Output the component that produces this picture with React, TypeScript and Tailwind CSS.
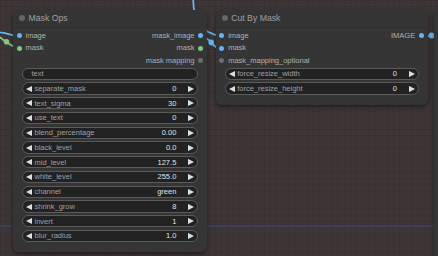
import React from "react";

type Slot = { label: string; color: string };

function Dot({ color }: { color: string }) {
  return <span className="block h-[5px] w-[5px] shrink-0 rounded-full" style={{ backgroundColor: color }} />;
}

function Arrow({ dir }: { dir: "l" | "r" }) {
  return (
    <svg
      className={
        "absolute top-1/2 -translate-y-1/2 " + (dir === "l" ? "left-[2.7px]" : "right-[2.7px]")
      }
      width="6.2"
      height="6.2"
      viewBox="0 0 10 10"
    >
      {dir === "l" ? (
        <polygon points="10,0 0,5 10,10" fill="#dddddd" />
      ) : (
        <polygon points="0,0 10,5 0,10" fill="#dddddd" />
      )}
    </svg>
  );
}

function NumWidget({ label, value }: { label: string; value: string }) {
  return (
    <div className="relative flex h-[12.3px] items-center rounded-full border border-[#5a5a5a] bg-[#222222] leading-none">
      <Arrow dir="l" />
      <span className="pl-[11.3px] text-[#a0a0a0]">{label}</span>
      <span className="ml-auto pr-[20.5px] text-[#e0e0e0]">{value}</span>
      <Arrow dir="r" />
    </div>
  );
}

function TextWidget({ label }: { label: string }) {
  return (
    <div className="flex h-[12.3px] items-center rounded-full border border-[#5a5a5a] bg-[#222222] leading-none">
      <span className="pl-[8.3px] text-[#a0a0a0]">{label}</span>
    </div>
  );
}

function SlotRows({ inputs, outputs }: { inputs: (Slot | null)[]; outputs: (Slot | null)[] }) {
  const n = Math.max(inputs.length, outputs.length);
  const rows = [];
  for (let i = 0; i < n; i++) {
    const a = inputs[i];
    const b = outputs[i];
    rows.push(
      <div key={i} className="flex h-[12.3px] items-center text-[#b0b0b0] leading-none">
        {a ? (
          <div className="flex items-center">
            <span className="ml-[3.7px]">
              <Dot color={a.color} />
            </span>
            <span className="ml-[3.8px]">{a.label}</span>
          </div>
        ) : null}
        {b ? (
          <div className="ml-auto flex items-center">
            <span>{b.label}</span>
            <span className="ml-[3.8px] mr-[3.7px]">
              <Dot color={b.color} />
            </span>
          </div>
        ) : null}
      </div>
    );
  }
  return <div className="flex flex-col">{rows}</div>;
}

function Node({
  title,
  className,
  inputs,
  outputs,
  children,
}: {
  title: string;
  className: string;
  inputs: (Slot | null)[];
  outputs: (Slot | null)[];
  children: React.ReactNode;
}) {
  return (
    <div
      className={
        "absolute flex flex-col rounded-[6px] bg-[#353535] shadow-[0_2px_4px_rgba(0,0,0,0.45)] text-[7.5px] " +
        className
      }
    >
      <div className="flex h-[18px] shrink-0 items-center rounded-t-[6px] border-b border-[#2e2e2e] bg-[#343434]">
        <span className="ml-[6.3px] block h-[5.6px] w-[5.6px] rounded-full bg-[#666666]" />
        <span className="ml-[3.6px] text-[8.7px] leading-none text-[#a0a0a0]">{title}</span>
      </div>
      <div className="flex flex-col pt-[2.2px] pb-[10px]">
        <SlotRows inputs={inputs} outputs={outputs} />
        <div className="mx-[9.2px] mt-[1.1px] flex flex-col gap-[2.46px]">{children}</div>
      </div>
    </div>
  );
}

const BLUE = "#64b5f6";
const GREEN = "#81c784";
const GRAY = "#6b6b73";

export default function App() {
  return (
    <div className="relative h-[256px] w-[438px] overflow-hidden bg-[#3e3536] font-['Liberation_Sans',Arial,sans-serif]">
      <div className="absolute inset-0 bg-[image:linear-gradient(to_right,rgba(0,0,0,0.08)_1px,transparent_1px),linear-gradient(to_bottom,rgba(0,0,0,0.08)_1px,transparent_1px)] bg-[size:6.15px_6.15px]" />
      <svg className="absolute inset-0" width="438" height="256" viewBox="0 0 438 256">
        <line x1="0" y1="226.2" x2="438" y2="226.2" stroke="#434c78" strokeWidth="1" />
        <path d="M-4 32 C6 32.5, 12 35.5, 19 36.3" stroke={BLUE} strokeWidth="1.8" fill="none" />
        <path d="M-2 36 C4 40, 10 46, 19 48.7" stroke={GREEN} strokeWidth="1.8" fill="none" />
        <circle cx="6.5" cy="41.8" r="2.8" fill={GREEN} />
        <path d="M193.2 -2 C193 18, 199 32.5, 221.3 36.3" stroke={BLUE} strokeWidth="1.8" fill="none" />
        <path d="M201 36.3 C211 36.3, 211 48.6, 221.3 48.6" stroke={BLUE} strokeWidth="1.8" fill="none" />
        <circle cx="211.2" cy="42.4" r="2.8" fill={BLUE} />
        <path d="M420.3 36.3 C428 36.3, 432 35.2, 440 35.2" stroke={BLUE} strokeWidth="1.8" fill="none" />
        <circle cx="431.5" cy="35.5" r="3" fill={BLUE} />
      </svg>

      <Node
        title="Mask Ops"
        className="left-[13px] top-[9.5px] w-[194px]"
        inputs={[
          { label: "image", color: BLUE },
          { label: "mask", color: GREEN },
        ]}
        outputs={[
          { label: "mask_image", color: BLUE },
          { label: "mask", color: GREEN },
          { label: "mask mapping", color: GRAY },
        ]}
      >
        <TextWidget label="text" />
        <NumWidget label="separate_mask" value="0" />
        <NumWidget label="text_sigma" value="30" />
        <NumWidget label="use_text" value="0" />
        <NumWidget label="blend_percentage" value="0.00" />
        <NumWidget label="black_level" value="0.0" />
        <NumWidget label="mid_level" value="127.5" />
        <NumWidget label="white_level" value="255.0" />
        <NumWidget label="channel" value="green" />
        <NumWidget label="shrink_grow" value="8" />
        <NumWidget label="invert" value="1" />
        <NumWidget label="blur_radius" value="1.0" />
      </Node>

      <Node
        title="Cut By Mask"
        className="left-[215.7px] top-[9.5px] w-[212px]"
        inputs={[
          { label: "image", color: BLUE },
          { label: "mask", color: BLUE },
          { label: "mask_mapping_optional", color: GRAY },
        ]}
        outputs={[{ label: "IMAGE", color: BLUE }]}
      >
        <NumWidget label="force_resize_width" value="0" />
        <NumWidget label="force_resize_height" value="0" />
      </Node>

      <div className="absolute left-[434px] top-[9px] h-[260px] w-[60px] rounded-[6px] bg-[#353535] shadow-[0_2px_4px_rgba(0,0,0,0.45)]" />
    </div>
  );
}
